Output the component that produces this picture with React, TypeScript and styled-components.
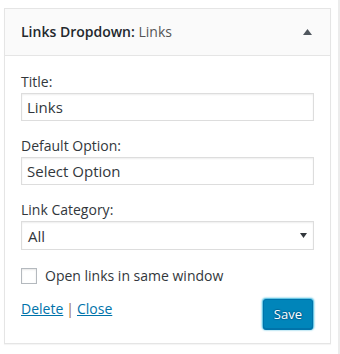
import styled, { createGlobalStyle } from 'styled-components';

const GlobalStyle = createGlobalStyle`
    html, body {
        margin: 0;
        padding: 0;
        background: #fff;
    }
    body {
        font-family: "Open Sans", "Liberation Sans", sans-serif;
        font-size: 14px;
        color: #444;
    }
`;

const Page = styled.div`
    width: 340px;
    height: 354px;
    box-sizing: border-box;
    padding: 8px 0 0 4px;
    border-right: 2px solid #ececec;
`;

const Widget = styled.div`
    width: 327px;
    box-shadow: 0 1px 1px rgba(0, 0, 0, 0.04);
`;

const WidgetTop = styled.div`
    height: 46px;
    border: 1px solid #e5e5e5;
    background: #fafafa;
    display: flex;
    align-items: center;
    justify-content: space-between;
    padding: 0 18px 0 16px;
`;

const WidgetTitle = styled.h3`
    margin: 0;
    font-size: 14px;
    line-height: 18px;
    font-weight: 600;
    color: #23282d;

    span {
        font-weight: 400;
        color: #555;
    }
`;

const WidgetInside = styled.div`
    border: 1px solid #e5e5e5;
    border-top: none;
    background: #fff;
    padding: 17px 16px 14px;
    display: flex;
    flex-direction: column;
`;

const Field = styled.div<{ $gap?: number }>`
    display: flex;
    flex-direction: column;
    margin-top: ${(p) => p.$gap ?? 0}px;
`;

const Label = styled.label`
    display: block;
    line-height: 18px;
    color: #32373c;
    margin-bottom: 2px;
`;

const TextInput = styled.input`
    box-sizing: border-box;
    width: 100%;
    height: 28px;
    margin: 0;
    padding: 0 5px;
    border: 1px solid #ddd;
    border-radius: 0;
    box-shadow: inset 0 1px 2px rgba(0, 0, 0, 0.07);
    background: #fff;
    font-family: "Open Sans", "Liberation Sans", sans-serif;
    font-size: 15px;
    color: #32373c;
    outline: none;
`;

const SelectBox = styled.div`
    box-sizing: border-box;
    height: 29px;
    border: 1px solid #ddd;
    box-shadow: inset 0 1px 2px rgba(0, 0, 0, 0.07);
    display: flex;
    align-items: center;
    justify-content: space-between;
    padding: 0 6px 0 6px;
    font-size: 15px;
    color: #32373c;
`;

const CheckRow = styled.label`
    display: flex;
    align-items: center;
    gap: 8px;
    margin-top: 17px;
    line-height: 18px;
    color: #32373c;
`;

const CheckBox = styled.span`
    box-sizing: border-box;
    width: 16px;
    height: 16px;
    border: 1px solid #b4b9be;
    background: #fff;
    box-shadow: inset 0 1px 2px rgba(0, 0, 0, 0.1);
`;

const Actions = styled.div`
    display: flex;
    justify-content: space-between;
    align-items: flex-start;
    margin-top: 14px;
`;

const LinkGroup = styled.div`
    margin-top: 1px;
    line-height: 18px;
    display: flex;
    gap: 3px;
`;

const ActionLink = styled.a`
    color: #0073aa;
    text-decoration: underline;
    cursor: pointer;
`;

const Separator = styled.span`
    color: #9a6a4a;
`;

const SaveButton = styled.button`
    box-sizing: border-box;
    height: 30px;
    padding: 0 10px;
    margin-right: 1px;
    border: 1px solid #0073aa;
    border-radius: 3px;
    background: #0085ba;
    color: #fff;
    font-family: "Open Sans", "Liberation Sans", sans-serif;
    font-size: 13px;
    text-shadow: 0 -1px 1px #006799, 1px 0 1px #006799, 0 1px 1px #006799, -1px 0 1px #006799;
    box-shadow: 0 1px 0 #0073aa, 0 0 2px 1px #33b3db;
    cursor: pointer;
`;

const Arrow = ({ up, w, h }: { up?: boolean; w: number; h: number }) => (
    <svg width={w} height={h} viewBox={`0 0 ${w} ${h}`}>
        <polygon
            points={up ? `0,${h} ${w / 2},0 ${w},${h}` : `0,0 ${w},0 ${w / 2},${h}`}
            fill={up ? '#50575e' : '#32373c'}
        />
    </svg>
);

const App = () => (
    <Page>
        <GlobalStyle />
        <Widget>
            <WidgetTop>
                <WidgetTitle>Links Dropdown: <span>Links</span></WidgetTitle>
                <Arrow up w={9} h={6} />
            </WidgetTop>
            <WidgetInside>
                <Field>
                    <Label>Title:</Label>
                    <TextInput readOnly defaultValue="Links" />
                </Field>
                <Field $gap={16}>
                    <Label>Default Option:</Label>
                    <TextInput readOnly defaultValue="Select Option" />
                </Field>
                <Field $gap={16}>
                    <Label>Link Category:</Label>
                    <SelectBox>
                        <span>All</span>
                        <Arrow w={7} h={5} />
                    </SelectBox>
                </Field>
                <CheckRow>
                    <CheckBox />
                    Open links in same window
                </CheckRow>
                <Actions>
                    <LinkGroup>
                        <ActionLink>Delete</ActionLink>
                        <Separator>|</Separator>
                        <ActionLink>Close</ActionLink>
                    </LinkGroup>
                    <SaveButton>Save</SaveButton>
                </Actions>
            </WidgetInside>
        </Widget>
    </Page>
);

export default App;
